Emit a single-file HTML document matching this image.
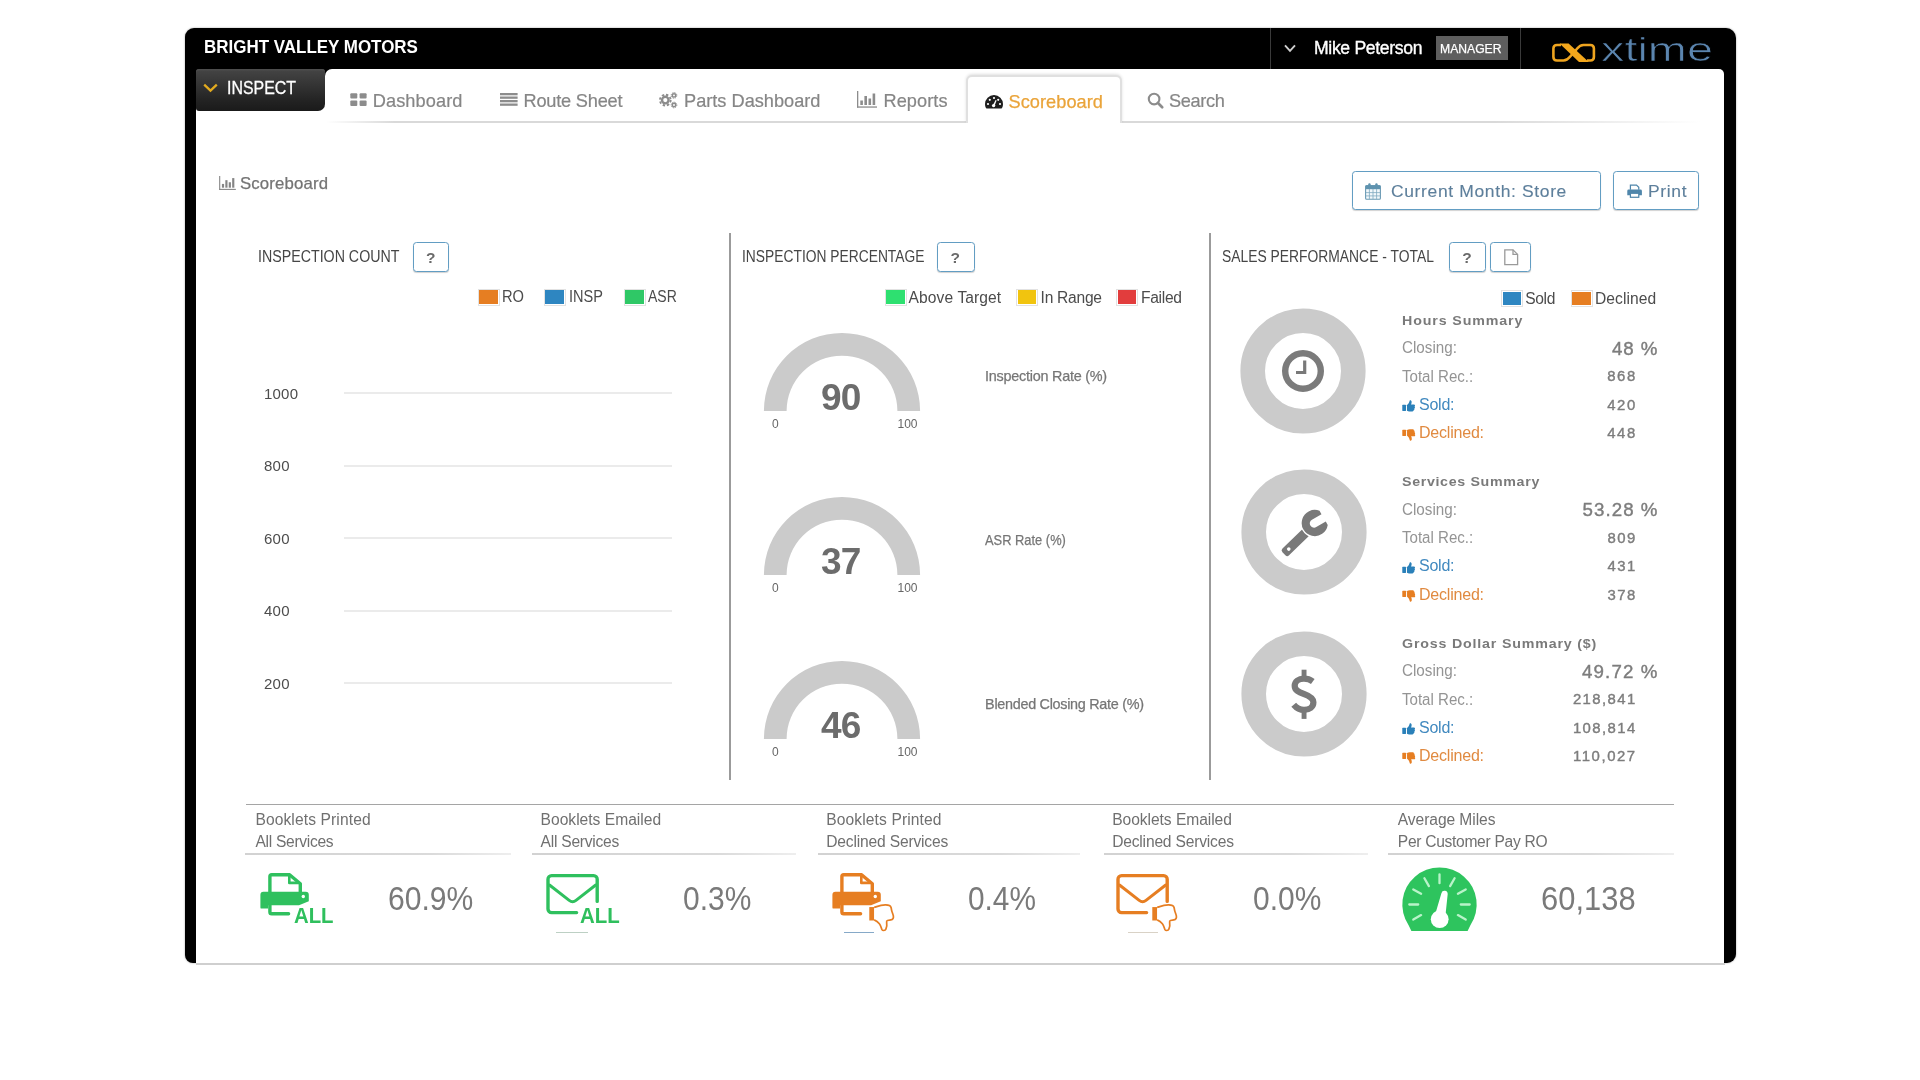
<!DOCTYPE html>
<html>
<head>
<meta charset="utf-8">
<title>Scoreboard</title>
<style>
*{box-sizing:border-box;margin:0;padding:0}
html,body{width:1920px;height:1080px;background:#fff;overflow:hidden}
body{font-family:"Liberation Sans",sans-serif;color:#777;position:relative}
#root{position:absolute;left:0;top:0;width:1920px;height:1080px;background:#fff;filter:blur(.4px)}
.a{position:absolute}
svg{position:absolute;overflow:visible}
.t{position:absolute;white-space:nowrap;line-height:1}
#frame{left:185px;top:28px;width:1551px;height:935px;background:#000;border-radius:9px 10px 9px 8px;box-shadow:0 0 2px rgba(0,0,0,.4)}
#content{left:196px;top:69px;width:1528px;height:894px;background:#fff;border-radius:0 5px 0 0}
#botline{left:196px;top:963px;width:1529px;height:2.2px;background:#cfcfcf}
#inspbg{left:196px;top:69px;width:140px;height:14px;background:#000}
#cc{left:325px;top:69px;width:20px;height:42px;background:#fff;border-radius:7px 0 0 0}
#inspect{left:196px;top:69px;width:129px;height:41.5px;background:linear-gradient(#454545 0,#333 40%,#232323 75%,#1a1a1a 100%);border-radius:3px 3px 7px 3px;box-shadow:inset 0 1.5px 0 #4d4d4d}
#tabline{left:326px;top:121px;width:1374px;height:1.5px;background:linear-gradient(90deg,rgba(215,215,215,0) 0,#d9d9d9 5%,#d9d9d9 85%,rgba(215,215,215,0) 100%)}
#acttab{left:965.5px;top:74.6px;width:156.5px;height:48px;background:#fff;border:2px solid #e0e0e0;border-bottom:none;border-radius:6px 6px 0 0;box-shadow:0 -1px 3px rgba(0,0,0,.12)}
#acttabcover{left:962px;top:122.5px;width:164px;height:6px;background:#fff}
.btn{position:absolute;border:1.5px solid #629dc3;border-radius:3.5px;background:#fff;box-shadow:0 1px 1px rgba(0,0,0,.18)}
.vl{position:absolute;width:2px;background:#9b9b9b;top:233px;height:547px}
.sw{position:absolute;width:22px;height:17px;border:1px solid #e2e2e2;padding:.7px;margin:-.5px 0 0 -.5px}
.sw i{display:block;width:100%;height:100%}
.grid{position:absolute;left:344px;width:328px;height:2px;background:#ebebeb}
.bu{position:absolute;height:1.5px;top:853.2px;background:linear-gradient(90deg,#d2d2d2 0,#dadada 70%,#eee 100%)}
</style>
</head>
<body>
<div id="root">
<div class="a" id="frame"></div>
<div class="a" id="content"></div>
<div class="a" id="botline"></div>
<div class="a" id="inspbg"></div>
<div class="a" id="cc"></div>
<div class="a" id="inspect"></div>

<!-- header bits -->
<svg style="left:203px;top:83px" width="15" height="10" viewBox="0 0 15 10"><path d="M1.2 1.6 L7.5 7.6 L13.8 1.6" fill="none" stroke="#e3ab1f" stroke-width="2.3"/></svg>
<div class="a" style="left:1270px;top:28px;width:1px;height:41px;background:#3a3a3a"></div>
<div class="a" style="left:1520px;top:28px;width:1px;height:41px;background:#3a3a3a"></div>
<svg style="left:1284px;top:44px" width="12" height="9" viewBox="0 0 12 9"><path d="M1 1.4 L6 6.8 L11 1.4" fill="none" stroke="#cfcfcf" stroke-width="1.9"/></svg>
<div class="a" style="left:1435.5px;top:35.5px;width:72px;height:24.5px;background:#5e5e5e"></div>
<!-- xtime logo -->
<svg style="left:1551px;top:42px" width="45" height="21" viewBox="0 0 45 21">
 <path d="M10 3 H6 Q2.4 3 2.4 6.5 V15 Q2.4 18.5 6 18.5 H12.5 Q16 18.5 19 14.8 L21.5 11.8 M36 18.5 H39.3 Q42.9 18.5 42.9 15 V6.5 Q42.9 3 39.3 3 H32.5 Q29 3 26 6.8 L23.5 9.8" fill="none" stroke="#eea41f" stroke-width="2.6"/>
 <path d="M8.6 1.6 H17.6 L37.8 19.9 H28 Z" fill="#f3a71c"/>
</svg>
<div class="t" id="xt" style="left:1601px;top:33.3px;font-size:33px;color:#5b85af;-webkit-text-stroke:.7px #000;transform-origin:0 0;transform:scaleX(1.42)">xtime</div>

<!-- tabs -->
<div class="a" id="tabline"></div>
<div class="a" id="acttab"></div>
<div class="a" id="acttabcover"></div>
<!-- dashboard icon -->
<svg style="left:350px;top:93px" width="17" height="13" viewBox="0 0 17 13" fill="#8c8c8c"><rect x=".3" y=".2" width="7" height="5.4" rx="1"/><rect x="9.6" y=".2" width="7" height="5.4" rx="1"/><rect x=".3" y="7.5" width="7" height="5.4" rx="1"/><rect x="9.6" y="7.5" width="7" height="5.4" rx="1"/></svg>
<!-- route sheet icon -->
<svg style="left:500px;top:93px" width="18" height="13" viewBox="0 0 18 13" fill="#8c8c8c"><rect x="0" y="0" width="17.6" height="2.3"/><rect x="0" y="3.5" width="17.6" height="2.3"/><rect x="0" y="7" width="17.6" height="2.3"/><rect x="0" y="10.5" width="17.6" height="2.3"/></svg>
<!-- cogs -->
<svg style="left:659px;top:92px" width="19" height="16" viewBox="0 0 19 16">
 <g fill="none" stroke="#8c8c8c">
 <circle cx="6.3" cy="8.1" r="3.3" stroke-width="2.4"/>
 <circle cx="6.3" cy="8.1" r="5.4" stroke-width="1.8" stroke-dasharray="2.4 1.85"/>
 <circle cx="15" cy="3.4" r="1.7" stroke-width="1.5"/>
 <circle cx="15" cy="3.4" r="2.8" stroke-width="1" stroke-dasharray="1.3 .9"/>
 <circle cx="15" cy="13" r="1.7" stroke-width="1.5"/>
 <circle cx="15" cy="13" r="2.8" stroke-width="1" stroke-dasharray="1.3 .9"/>
 </g>
</svg>
<!-- reports bar chart -->
<svg style="left:857px;top:91px" width="20" height="17" viewBox="0 0 20 17" fill="#8c8c8c"><rect x="0" y="0" width="1.3" height="16.6"/><rect x="0" y="15.4" width="20" height="1.3"/><rect x="3.3" y="9.5" width="2.6" height="4.5"/><rect x="7.4" y="5" width="2.6" height="9"/><rect x="11.5" y="7.5" width="2.6" height="6.5"/><rect x="15.6" y="2.5" width="2.6" height="11.5"/></svg>
<!-- tachometer -->
<svg style="left:985px;top:95px" width="18" height="14" viewBox="0 0 18 14">
 <path d="M9 0 A9 9 0 0 1 18 9 C18 10.8 17.5 12.3 16.8 13.2 C16.6 13.5 16.3 13.6 16 13.6 L2 13.6 C1.7 13.6 1.4 13.5 1.2 13.2 C0.5 12.3 0 10.8 0 9 A9 9 0 0 1 9 0 Z" fill="#1e1e1e"/>
 <g fill="#fff"><circle cx="3" cy="9" r="1.1"/><circle cx="4.8" cy="4.8" r="1.1"/><circle cx="9" cy="3" r="1.1"/><circle cx="15" cy="9" r="1.1"/><circle cx="13.2" cy="4.8" r="1.1"/><circle cx="8.6" cy="10.6" r="1.7"/><path d="M8 10 L10.6 5 L11.6 5.4 L9.6 10.8 Z"/></g>
</svg>
<!-- search -->
<svg style="left:1147px;top:92px" width="17" height="17" viewBox="0 0 17 17"><circle cx="7.1" cy="7.1" r="5.3" fill="none" stroke="#8c8c8c" stroke-width="2.1"/><path d="M11 11 L15.2 15.2" stroke="#8c8c8c" stroke-width="2.7" stroke-linecap="round"/></svg>

<!-- subtitle icon -->
<svg style="left:218px;top:175.6px" width="19" height="14.2" viewBox="0 0 20 17" fill="#858585"><rect x="0" y="0" width="1.3" height="16.6"/><rect x="0" y="15.4" width="20" height="1.3"/><rect x="3.3" y="9.5" width="2.6" height="4.5"/><rect x="7.4" y="5" width="2.6" height="9"/><rect x="11.5" y="7.5" width="2.6" height="6.5"/><rect x="15.6" y="2.5" width="2.6" height="11.5"/></svg>

<!-- buttons -->
<div class="btn" style="left:1352px;top:171px;width:248.5px;height:39px"></div>
<div class="btn" style="left:1613px;top:171px;width:85.5px;height:39px"></div>
<!-- calendar -->
<svg style="left:1365px;top:183px" width="16" height="17" viewBox="0 0 16 17">
 <rect x=".6" y="2.6" width="14.8" height="13.6" rx="1" fill="#f2f8fb" stroke="#6a9ab4" stroke-width="1.1"/>
 <rect x=".6" y="2.6" width="14.8" height="3.6" fill="#5f93af"/>
 <rect x="3.3" y="0.3" width="2.3" height="4" rx="1" fill="#5f93af"/><rect x="10.3" y="0.3" width="2.3" height="4" rx="1" fill="#5f93af"/>
 <g stroke="#7fa9c0" stroke-width=".8"><path d="M4.4 6 V16 M8 6 V16 M11.6 6 V16 M1 9.6 H15 M1 12.9 H15"/></g>
</svg>
<!-- small printer -->
<svg style="left:1626.7px;top:183.6px" width="15.2" height="14.6" viewBox="0 0 16 15">
 <path d="M3.6 6 V1 H10 L12.4 3.3 V6" fill="#fff" stroke="#4f86ab" stroke-width="1.3"/>
 <path d="M1.8 5.6 H14.2 A1.5 1.5 0 0 1 15.7 7.1 V11.6 H12.6 V9.2 H3.4 V11.6 H.3 V7.1 A1.5 1.5 0 0 1 1.8 5.6 Z" fill="#4f86ab"/>
 <rect x="3.6" y="9.6" width="8.8" height="4.2" fill="#fff" stroke="#4f86ab" stroke-width="1.3"/>
</svg>

<!-- panel separators -->
<div class="vl" style="left:728.5px"></div>
<div class="vl" style="left:1208.5px"></div>

<!-- ? buttons -->
<div class="btn" style="left:412.5px;top:242px;width:36px;height:29.5px"></div>
<div class="btn" style="left:937px;top:242px;width:37.5px;height:29.5px"></div>
<div class="btn" style="left:1449px;top:242px;width:36.6px;height:29.5px"></div>
<div class="btn" style="left:1490px;top:242px;width:41px;height:29.5px"></div>
<!-- doc icon -->
<svg style="left:1503.5px;top:249px" width="15" height="17" viewBox="0 0 15 17"><path d="M.8 .8 H9 L13.6 5.4 V15.6 H.8 Z" fill="none" stroke="#9a9a9a" stroke-width="1.3"/><path d="M9 .8 V5.4 H13.6" fill="none" stroke="#9a9a9a" stroke-width="1.3"/></svg>

<!-- legend swatches -->
<div class="sw" style="left:478px;top:289px"><i style="background:#e67e22"></i></div>
<div class="sw" style="left:544px;top:289px"><i style="background:#2e86c1"></i></div>
<div class="sw" style="left:624px;top:289px"><i style="background:#2fc866"></i></div>
<div class="sw" style="left:885px;top:289px"><i style="background:#2ee070"></i></div>
<div class="sw" style="left:1016.5px;top:289px"><i style="background:#f1c40f"></i></div>
<div class="sw" style="left:1116.5px;top:289px"><i style="background:#e23d3d"></i></div>
<div class="sw" style="left:1501.5px;top:290.5px"><i style="background:#2e86c1"></i></div>
<div class="sw" style="left:1571px;top:290.5px"><i style="background:#e67e22"></i></div>

<!-- grid lines -->
<div class="grid" style="top:392px"></div>
<div class="grid" style="top:464.6px"></div>
<div class="grid" style="top:537.2px"></div>
<div class="grid" style="top:609.8px"></div>
<div class="grid" style="top:682.4px"></div>

<!-- gauges -->
<svg style="left:761.9px;top:330.9px" width="160" height="82" viewBox="0 0 160 82"><path d="M1.9 80 A78.1 78.1 0 0 1 158.1 80 L135.4 80 A55.4 55.4 0 0 0 24.6 80 Z" fill="#cbcbcb"/></svg>
<svg style="left:761.9px;top:494.9px" width="160" height="82" viewBox="0 0 160 82"><path d="M1.9 80 A78.1 78.1 0 0 1 158.1 80 L135.4 80 A55.4 55.4 0 0 0 24.6 80 Z" fill="#cbcbcb"/></svg>
<svg style="left:761.9px;top:658.9px" width="160" height="82" viewBox="0 0 160 82"><path d="M1.9 80 A78.1 78.1 0 0 1 158.1 80 L135.4 80 A55.4 55.4 0 0 0 24.6 80 Z" fill="#cbcbcb"/></svg>

<!-- donuts -->
<svg style="left:1238.3px;top:305.6px" width="130" height="130" viewBox="0 0 130 130"><circle cx="65" cy="65" r="50.3" fill="none" stroke="#cbcbcb" stroke-width="24.6"/>
 <circle cx="65" cy="65" r="17.8" fill="none" stroke="#7b7b7b" stroke-width="6.4"/><path d="M66.7 54.6 V66.5 H58" fill="none" stroke="#797979" stroke-width="3.2" stroke-linejoin="miter"/></svg>
<svg style="left:1238.5px;top:467px" width="130" height="130" viewBox="0 0 130 130"><circle cx="65" cy="65" r="50.3" fill="none" stroke="#cbcbcb" stroke-width="24.6"/>
 <g transform="translate(44.9 86.8) rotate(-44.3)" fill="#797979"><path d="M2.6 -4.7 H30 V4.7 H2.6 A2.6 2.6 0 0 1 0 2.1 V-2.1 A2.6 2.6 0 0 1 2.6 -4.7 Z"/><circle cx="6.8" cy="0" r="1.8" fill="#fff"/></g>
 <g transform="translate(75.8 56) rotate(-30)"><circle r="14.3" fill="#fff"/><path d="M10.2 -4.3 L10.2 -8.2 A13.1 13.1 0 1 0 10.2 8.2 L10.2 4.3 L-.8 4.3 A4.3 4.3 0 0 1 -.8 -4.3 Z" fill="#797979"/></g></svg>
<svg style="left:1238.5px;top:628.5px" width="130" height="130" viewBox="0 0 130 130"><circle cx="65" cy="65" r="50.3" fill="none" stroke="#cbcbcb" stroke-width="24.6"/>
 <path d="M73.8 52.5 C71 50.5 68 49.7 65 49.7 C59.5 49.7 55.7 52.7 55.7 57 C55.7 61.5 60 63.3 65 65 C70 66.8 74.4 68.8 74.4 73.3 C74.4 78 70.5 80.9 65 80.9 C61 80.9 57.5 79 54.7 75.7" fill="none" stroke="#797979" stroke-width="6.2"/>
 <rect x="62.6" y="40.7" width="4.9" height="9.5" fill="#797979"/><rect x="62.6" y="80.5" width="4.9" height="9.4" fill="#797979"/></svg>

<!-- thumbs -->
<svg style="left:1401.6px;top:400.0px" width="13.4" height="11.5" viewBox="0 0 14 12" fill="#2a80b9"><rect x=".3" y="4.9" width="3.9" height="6.6" rx=".5"/><path d="M5.2 5.2 C6.6 4.2 7.6 2.6 8 .7 C8.3 -.3 10.1 .2 10.1 2 C10.1 3 9.7 4 9.4 4.6 H12.5 C13.7 4.6 14 6.2 13.1 6.8 C13.9 7.4 13.6 8.6 12.8 8.9 C13.3 9.6 12.9 10.6 12.1 10.8 C12.3 11.6 11.6 11.9 10.9 11.9 H8 C7 11.9 6 11.3 5.2 11.1 Z"/></svg>
<svg style="left:1401.6px;top:428.9px" width="13.6" height="12" viewBox="0 0 14 12" fill="#e67e22"><g transform="translate(0 12) scale(1 -1)"><rect x=".3" y="4.9" width="3.9" height="6.6" rx=".5"/><path d="M5.2 5.2 C6.6 4.2 7.6 2.6 8 .7 C8.3 -.3 10.1 .2 10.1 2 C10.1 3 9.7 4 9.4 4.6 H12.5 C13.7 4.6 14 6.2 13.1 6.8 C13.9 7.4 13.6 8.6 12.8 8.9 C13.3 9.6 12.9 10.6 12.1 10.8 C12.3 11.6 11.6 11.9 10.9 11.9 H8 C7 11.9 6 11.3 5.2 11.1 Z"/></g></svg>
<svg style="left:1401.6px;top:561.5px" width="13.4" height="11.5" viewBox="0 0 14 12" fill="#2a80b9"><rect x=".3" y="4.9" width="3.9" height="6.6" rx=".5"/><path d="M5.2 5.2 C6.6 4.2 7.6 2.6 8 .7 C8.3 -.3 10.1 .2 10.1 2 C10.1 3 9.7 4 9.4 4.6 H12.5 C13.7 4.6 14 6.2 13.1 6.8 C13.9 7.4 13.6 8.6 12.8 8.9 C13.3 9.6 12.9 10.6 12.1 10.8 C12.3 11.6 11.6 11.9 10.9 11.9 H8 C7 11.9 6 11.3 5.2 11.1 Z"/></svg>
<svg style="left:1401.6px;top:590.4px" width="13.6" height="12" viewBox="0 0 14 12" fill="#e67e22"><g transform="translate(0 12) scale(1 -1)"><rect x=".3" y="4.9" width="3.9" height="6.6" rx=".5"/><path d="M5.2 5.2 C6.6 4.2 7.6 2.6 8 .7 C8.3 -.3 10.1 .2 10.1 2 C10.1 3 9.7 4 9.4 4.6 H12.5 C13.7 4.6 14 6.2 13.1 6.8 C13.9 7.4 13.6 8.6 12.8 8.9 C13.3 9.6 12.9 10.6 12.1 10.8 C12.3 11.6 11.6 11.9 10.9 11.9 H8 C7 11.9 6 11.3 5.2 11.1 Z"/></g></svg>
<svg style="left:1401.6px;top:723.0px" width="13.4" height="11.5" viewBox="0 0 14 12" fill="#2a80b9"><rect x=".3" y="4.9" width="3.9" height="6.6" rx=".5"/><path d="M5.2 5.2 C6.6 4.2 7.6 2.6 8 .7 C8.3 -.3 10.1 .2 10.1 2 C10.1 3 9.7 4 9.4 4.6 H12.5 C13.7 4.6 14 6.2 13.1 6.8 C13.9 7.4 13.6 8.6 12.8 8.9 C13.3 9.6 12.9 10.6 12.1 10.8 C12.3 11.6 11.6 11.9 10.9 11.9 H8 C7 11.9 6 11.3 5.2 11.1 Z"/></svg>
<svg style="left:1401.6px;top:751.9px" width="13.6" height="12" viewBox="0 0 14 12" fill="#e67e22"><g transform="translate(0 12) scale(1 -1)"><rect x=".3" y="4.9" width="3.9" height="6.6" rx=".5"/><path d="M5.2 5.2 C6.6 4.2 7.6 2.6 8 .7 C8.3 -.3 10.1 .2 10.1 2 C10.1 3 9.7 4 9.4 4.6 H12.5 C13.7 4.6 14 6.2 13.1 6.8 C13.9 7.4 13.6 8.6 12.8 8.9 C13.3 9.6 12.9 10.6 12.1 10.8 C12.3 11.6 11.6 11.9 10.9 11.9 H8 C7 11.9 6 11.3 5.2 11.1 Z"/></g></svg>

<!-- bottom row -->
<div class="a" style="left:246px;top:803.5px;width:1428px;height:1.5px;background:#a5a5a5"></div>
<div class="bu" style="left:245px;width:266px"></div>
<div class="bu" style="left:532px;width:264px"></div>
<div class="bu" style="left:818px;width:262px"></div>
<div class="bu" style="left:1103.5px;width:264px"></div>
<div class="bu" style="left:1388px;width:286px"></div>
<svg style="left:259px;top:872px" width="52" height="46" viewBox="0 0 52 46">
 <g fill="none" stroke="#2fc05e" stroke-width="3.4" stroke-linejoin="round"><path d="M10.9 22 V4.6 A1.8 1.8 0 0 1 12.7 2.8 H30.6 L41.3 11.8 V22"/><path d="M30.3 3.5 V10.9 H39.5" stroke-width="2.6"/></g>
 <path d="M4.4 19.7 H46.8 A3 3 0 0 1 49.8 22.7 V29.2 L40 33.3 H9.2 V36.6 H2.6 A1.2 1.2 0 0 1 1.4 35.4 V22.7 A3 3 0 0 1 4.4 19.7 Z" fill="#2fc05e"/>
 <path d="M10.9 33 V40 A1.8 1.8 0 0 0 12.7 41.8 H29.6" fill="none" stroke="#2fc05e" stroke-width="3.4" stroke-linecap="round"/>
 <circle cx="44.3" cy="24.5" r="1.7" fill="#fff"/></svg>
<svg style="left:546px;top:872.6px" width="56" height="44" viewBox="0 0 56 44" fill="none" stroke="#2fc05e" stroke-width="3.4" stroke-linecap="round" stroke-linejoin="round">
 <path d="M51.2 28.4 V6.2 A3.6 3.6 0 0 0 47.6 2.6 H5.6 A3.6 3.6 0 0 0 2 6.2 V36 A3.6 3.6 0 0 0 5.6 39.6 H30.6"/>
 <path d="M3.8 12.2 L23.2 27.4 Q26.6 30 30 27.4 L49.4 12.2" stroke-width="3"/></svg>
<svg style="left:830.7px;top:872px" width="52" height="46" viewBox="0 0 52 46">
 <g fill="none" stroke="#e67e22" stroke-width="3.4" stroke-linejoin="round"><path d="M10.9 22 V4.6 A1.8 1.8 0 0 1 12.7 2.8 H30.6 L41.3 11.8 V22"/><path d="M30.3 3.5 V10.9 H39.5" stroke-width="2.6"/></g>
 <path d="M4.4 19.7 H46.8 A3 3 0 0 1 49.8 22.7 V29.2 L40 33.3 H9.2 V36.6 H2.6 A1.2 1.2 0 0 1 1.4 35.4 V22.7 A3 3 0 0 1 4.4 19.7 Z" fill="#e67e22"/>
 <path d="M10.9 33 V40 A1.8 1.8 0 0 0 12.7 41.8 H29.6" fill="none" stroke="#e67e22" stroke-width="3.4" stroke-linecap="round"/>
 <circle cx="44.3" cy="24.5" r="1.7" fill="#fff"/></svg>
<svg style="left:868.8px;top:903.6px" width="25.9" height="27.8" viewBox="0 0 27 29">
 <rect x=".3" y="3.2" width="5.2" height="14" fill="#e67e22"/>
 <path d="M5.4 3.6 C9 2.4 12 1 17 .9 C20.6 .8 22.4 1.6 23 3.6 C23.4 5 23.4 6 23.8 7.4 C24.2 9 25 10.4 25.4 12.4 C25.8 14.6 25 16.2 22.8 16.6 L19.2 17.2 C18.4 17.4 18.2 18 18.4 19 C18.8 21.4 18.6 24 17.6 26.2 C16.8 28 14.2 28.2 13.4 26.4 C12.6 24.4 12.2 22.4 10.8 20.6 C9.4 18.8 7.6 17.4 5.4 16.6" fill="#fff" stroke="#e67e22" stroke-width="1.8" stroke-linejoin="round"/></svg>
<svg style="left:1116px;top:872.8px" width="56" height="44" viewBox="0 0 56 44" fill="none" stroke="#e67e22" stroke-width="3.4" stroke-linecap="round" stroke-linejoin="round">
 <path d="M51.2 28.4 V6.2 A3.6 3.6 0 0 0 47.6 2.6 H5.6 A3.6 3.6 0 0 0 2 6.2 V36 A3.6 3.6 0 0 0 5.6 39.6 H30.6"/>
 <path d="M3.8 12.2 L23.2 27.4 Q26.6 30 30 27.4 L49.4 12.2" stroke-width="3"/></svg>
<svg style="left:1152.2px;top:903.8px" width="25.9" height="27.8" viewBox="0 0 27 29">
 <rect x=".3" y="3.2" width="5.2" height="14" fill="#e67e22"/>
 <path d="M5.4 3.6 C9 2.4 12 1 17 .9 C20.6 .8 22.4 1.6 23 3.6 C23.4 5 23.4 6 23.8 7.4 C24.2 9 25 10.4 25.4 12.4 C25.8 14.6 25 16.2 22.8 16.6 L19.2 17.2 C18.4 17.4 18.2 18 18.4 19 C18.8 21.4 18.6 24 17.6 26.2 C16.8 28 14.2 28.2 13.4 26.4 C12.6 24.4 12.2 22.4 10.8 20.6 C9.4 18.8 7.6 17.4 5.4 16.6" fill="#fff" stroke="#e67e22" stroke-width="1.8" stroke-linejoin="round"/></svg>
<svg style="left:1401.5px;top:866.9px" width="75" height="65" viewBox="0 0 75 65">
 <path d="M9.4 64 L6.6 58.3 A37.2 37.2 0 1 1 68.4 58.3 L65.6 64 Z" fill="#2ec45e"/>
 <path d="M19.1 48.1 L11.3 52.6 M16.2 37.5 L7.3 37.5 M19.1 26.8 L11.3 22.4 M26.9 19.1 L22.4 11.3 M37.5 16.2 L37.5 7.3 M48.1 19.1 L52.6 11.3 M55.9 26.8 L63.7 22.4 M58.8 37.5 L67.7 37.5 M55.9 48.1 L63.7 52.6" stroke="#b9f3c9" stroke-width="2.3" stroke-linecap="round" fill="none"/>
 <circle cx="37.7" cy="52.2" r="8.9" fill="#fff"/><path d="M33.6 46 L39.4 26.2 A3.2 3.2 0 0 1 45.7 27 L43.6 47 Z" fill="#fff"/></svg>
<div class="a" style="left:556px;top:931.5px;width:32px;height:1.2px;background:#bdd0c4"></div>
<div class="a" style="left:843.5px;top:931.5px;width:30px;height:1.2px;background:#86a9c8"></div>
<div class="a" style="left:1128px;top:931.5px;width:30px;height:1.2px;background:#d9d2c6"></div>

<div class="t" style="left:204.0px;top:38.6px;font-size:17.8px;color:#fff;font-weight:bold;transform-origin:0 0;transform:scaleX(0.954);">BRIGHT VALLEY MOTORS</div>
<div class="t" style="left:226.5px;top:78.1px;font-size:19px;color:#fff;transform-origin:0 0;transform:scaleX(0.838);-webkit-text-stroke:.3px #fff;">INSPECT</div>
<div class="t" style="left:1314.0px;top:39.6px;font-size:17.6px;color:#fff;letter-spacing:-0.33px;-webkit-text-stroke:.35px #fff;">Mike Peterson</div>
<div class="t" style="left:1440.0px;top:41.7px;font-size:13.6px;color:#fff;transform-origin:0 0;transform:scaleX(0.895);-webkit-text-stroke:.25px #fff;">MANAGER</div>
<div class="t" style="left:372.7px;top:91.9px;font-size:18.2px;color:#868686;letter-spacing:0.10px;-webkit-text-stroke:.2px #868686;">Dashboard</div>
<div class="t" style="left:523.5px;top:91.9px;font-size:18.2px;color:#868686;letter-spacing:-0.21px;-webkit-text-stroke:.2px #868686;">Route Sheet</div>
<div class="t" style="left:684.0px;top:91.9px;font-size:18.2px;color:#868686;-webkit-text-stroke:.2px #868686;">Parts Dashboard</div>
<div class="t" style="left:883.5px;top:91.9px;font-size:18.2px;color:#868686;letter-spacing:0.05px;-webkit-text-stroke:.2px #868686;">Reports</div>
<div class="t" style="left:1008.5px;top:92.7px;font-size:18.2px;color:#eaa43a;letter-spacing:0.05px;-webkit-text-stroke:.25px #eaa43a;">Scoreboard</div>
<div class="t" style="left:1169.0px;top:91.9px;font-size:18.2px;color:#868686;letter-spacing:-0.33px;-webkit-text-stroke:.2px #868686;">Search</div>
<div class="t" style="left:240.0px;top:174.6px;font-size:16.2px;color:#747474;transform-origin:0 0;transform:scaleX(1.035);letter-spacing:0.15px;-webkit-text-stroke:.25px #747474;">Scoreboard</div>
<div class="t" style="left:1390.9px;top:183.9px;font-size:15.9px;color:#5d7f9b;transform-origin:0 0;transform:scaleX(1.1);letter-spacing:0.58px;-webkit-text-stroke:.12px #5d7f9b;">Current Month: Store</div>
<div class="t" style="left:1648.0px;top:183.9px;font-size:15.9px;color:#5d7f9b;transform-origin:0 0;transform:scaleX(1.1);letter-spacing:0.58px;-webkit-text-stroke:.12px #5d7f9b;">Print</div>
<div class="t" style="left:257.7px;top:248.8px;font-size:15.6px;color:#464646;transform-origin:0 0;transform:scaleX(0.912);">INSPECTION COUNT</div>
<div class="t" style="left:742.4px;top:249.0px;font-size:15.6px;color:#464646;transform-origin:0 0;transform:scaleX(0.886);">INSPECTION PERCENTAGE</div>
<div class="t" style="left:1221.5px;top:249.0px;font-size:15.6px;color:#464646;transform-origin:0 0;transform:scaleX(0.889);">SALES PERFORMANCE - TOTAL</div>
<div class="t" style="left:426.0px;top:249.7px;font-size:15.5px;color:#6a6a6a;font-weight:bold;">?</div>
<div class="t" style="left:950.5px;top:249.7px;font-size:15.5px;color:#6a6a6a;font-weight:bold;">?</div>
<div class="t" style="left:1462.3px;top:249.7px;font-size:15.5px;color:#6a6a6a;font-weight:bold;">?</div>
<div class="t" style="left:501.5px;top:289.3px;font-size:15.6px;color:#4c4c4c;transform-origin:0 0;transform:scaleX(0.941);">RO</div>
<div class="t" style="left:569.0px;top:289.3px;font-size:15.6px;color:#4c4c4c;transform-origin:0 0;transform:scaleX(0.934);">INSP</div>
<div class="t" style="left:647.7px;top:289.3px;font-size:15.6px;color:#4c4c4c;transform-origin:0 0;transform:scaleX(0.898);">ASR</div>
<div class="t" style="left:908.6px;top:289.6px;font-size:15.6px;color:#4c4c4c;letter-spacing:0.09px;">Above Target</div>
<div class="t" style="left:1040.6px;top:289.6px;font-size:15.6px;color:#4c4c4c;letter-spacing:-0.27px;">In Range</div>
<div class="t" style="left:1140.9px;top:289.6px;font-size:15.6px;color:#4c4c4c;letter-spacing:-0.28px;">Failed</div>
<div class="t" style="left:1525.2px;top:290.6px;font-size:15.6px;color:#4c4c4c;letter-spacing:-0.34px;">Sold</div>
<div class="t" style="left:1595.0px;top:290.6px;font-size:15.6px;color:#4c4c4c;letter-spacing:0.06px;">Declined</div>
<div class="t" style="left:264.0px;top:385.8px;font-size:15px;color:#4c4c4c;letter-spacing:0.21px;">1000</div>
<div class="t" style="left:264.0px;top:458.3px;font-size:15px;color:#4c4c4c;letter-spacing:0.23px;">800</div>
<div class="t" style="left:264.0px;top:530.8px;font-size:15px;color:#4c4c4c;letter-spacing:0.23px;">600</div>
<div class="t" style="left:264.0px;top:602.8px;font-size:15px;color:#4c4c4c;letter-spacing:0.23px;">400</div>
<div class="t" style="left:264.0px;top:675.8px;font-size:15px;color:#4c4c4c;letter-spacing:0.23px;">200</div>
<div class="t" style="left:821.0px;top:378.8px;font-size:37px;color:#6c6c6c;font-weight:bold;letter-spacing:-0.76px;">90</div>
<div class="t" style="left:772.0px;top:418.1px;font-size:12px;color:#666;">0</div>
<div class="t" style="left:897.6px;top:418.1px;font-size:12px;color:#666;letter-spacing:-0.12px;">100</div>
<div class="t" style="left:985.1px;top:369.3px;font-size:14.4px;color:#767676;letter-spacing:-0.24px;-webkit-text-stroke:.25px #767676;">Inspection Rate (%)</div>
<div class="t" style="left:821.0px;top:542.8px;font-size:37px;color:#6c6c6c;font-weight:bold;letter-spacing:-0.76px;">37</div>
<div class="t" style="left:772.0px;top:582.1px;font-size:12px;color:#666;">0</div>
<div class="t" style="left:897.6px;top:582.1px;font-size:12px;color:#666;letter-spacing:-0.12px;">100</div>
<div class="t" style="left:985.1px;top:533.3px;font-size:14.4px;color:#767676;transform-origin:0 0;transform:scaleX(0.895);-webkit-text-stroke:.25px #767676;">ASR Rate (%)</div>
<div class="t" style="left:821.0px;top:706.8px;font-size:37px;color:#6c6c6c;font-weight:bold;letter-spacing:-0.76px;">46</div>
<div class="t" style="left:772.0px;top:746.1px;font-size:12px;color:#666;">0</div>
<div class="t" style="left:897.6px;top:746.1px;font-size:12px;color:#666;letter-spacing:-0.12px;">100</div>
<div class="t" style="left:985.1px;top:697.3px;font-size:14.4px;color:#767676;letter-spacing:-0.29px;-webkit-text-stroke:.25px #767676;">Blended Closing Rate (%)</div>
<div class="t" style="left:1401.5px;top:313.7px;font-size:13.3px;color:#7a7a7a;font-weight:bold;transform-origin:0 0;transform:scaleX(1.07);letter-spacing:0.82px;">Hours Summary</div>
<div class="t" style="left:1401.5px;top:340.4px;font-size:16px;color:#949494;transform-origin:0 0;transform:scaleX(0.950);">Closing:</div>
<div class="t" style="left:1612.0px;top:339.9px;font-size:18.7px;color:#7d7d7d;letter-spacing:0.96px;-webkit-text-stroke:.4px #7d7d7d;">48 %</div>
<div class="t" style="left:1401.5px;top:368.5px;font-size:16px;color:#949494;transform-origin:0 0;transform:scaleX(0.942);">Total Rec.:</div>
<div class="t" style="left:1607.2px;top:369.3px;font-size:14.9px;color:#7d7d7d;letter-spacing:1.57px;-webkit-text-stroke:.4px #7d7d7d;">868</div>
<div class="t" style="left:1419.0px;top:396.9px;font-size:16px;color:#4189bf;letter-spacing:-0.24px;">Sold:</div>
<div class="t" style="left:1607.2px;top:397.7px;font-size:14.9px;color:#7d7d7d;letter-spacing:1.57px;-webkit-text-stroke:.4px #7d7d7d;">420</div>
<div class="t" style="left:1419.0px;top:425.4px;font-size:16px;color:#e08a40;letter-spacing:-0.21px;">Declined:</div>
<div class="t" style="left:1607.2px;top:426.2px;font-size:14.9px;color:#7d7d7d;letter-spacing:1.57px;-webkit-text-stroke:.4px #7d7d7d;">448</div>
<div class="t" style="left:1401.5px;top:475.2px;font-size:13.3px;color:#7a7a7a;font-weight:bold;transform-origin:0 0;transform:scaleX(1.07);letter-spacing:0.62px;">Services Summary</div>
<div class="t" style="left:1401.5px;top:501.9px;font-size:16px;color:#949494;transform-origin:0 0;transform:scaleX(0.950);">Closing:</div>
<div class="t" style="left:1582.6px;top:501.4px;font-size:18.7px;color:#7d7d7d;letter-spacing:1.05px;-webkit-text-stroke:.4px #7d7d7d;">53.28 %</div>
<div class="t" style="left:1401.5px;top:530.0px;font-size:16px;color:#949494;transform-origin:0 0;transform:scaleX(0.942);">Total Rec.:</div>
<div class="t" style="left:1607.4px;top:530.8px;font-size:14.9px;color:#7d7d7d;letter-spacing:1.47px;-webkit-text-stroke:.4px #7d7d7d;">809</div>
<div class="t" style="left:1419.0px;top:558.4px;font-size:16px;color:#4189bf;letter-spacing:-0.24px;">Sold:</div>
<div class="t" style="left:1607.4px;top:559.2px;font-size:14.9px;color:#7d7d7d;letter-spacing:1.47px;-webkit-text-stroke:.4px #7d7d7d;">431</div>
<div class="t" style="left:1419.0px;top:586.9px;font-size:16px;color:#e08a40;letter-spacing:-0.21px;">Declined:</div>
<div class="t" style="left:1607.4px;top:587.7px;font-size:14.9px;color:#7d7d7d;letter-spacing:1.47px;-webkit-text-stroke:.4px #7d7d7d;">378</div>
<div class="t" style="left:1401.5px;top:636.7px;font-size:13.3px;color:#7a7a7a;font-weight:bold;transform-origin:0 0;transform:scaleX(1.07);letter-spacing:0.76px;">Gross Dollar Summary ($)</div>
<div class="t" style="left:1401.5px;top:663.4px;font-size:16px;color:#949494;transform-origin:0 0;transform:scaleX(0.950);">Closing:</div>
<div class="t" style="left:1582.0px;top:662.9px;font-size:18.7px;color:#7d7d7d;letter-spacing:1.15px;-webkit-text-stroke:.4px #7d7d7d;">49.72 %</div>
<div class="t" style="left:1401.5px;top:691.5px;font-size:16px;color:#949494;transform-origin:0 0;transform:scaleX(0.942);">Total Rec.:</div>
<div class="t" style="left:1572.9px;top:692.3px;font-size:14.9px;color:#7d7d7d;letter-spacing:1.41px;-webkit-text-stroke:.4px #7d7d7d;">218,841</div>
<div class="t" style="left:1419.0px;top:719.9px;font-size:16px;color:#4189bf;letter-spacing:-0.24px;">Sold:</div>
<div class="t" style="left:1572.9px;top:720.7px;font-size:14.9px;color:#7d7d7d;letter-spacing:1.41px;-webkit-text-stroke:.4px #7d7d7d;">108,814</div>
<div class="t" style="left:1419.0px;top:748.4px;font-size:16px;color:#e08a40;letter-spacing:-0.21px;">Declined:</div>
<div class="t" style="left:1572.9px;top:749.2px;font-size:14.9px;color:#7d7d7d;letter-spacing:1.59px;-webkit-text-stroke:.4px #7d7d7d;">110,027</div>
<div class="t" style="left:255.4px;top:812.3px;font-size:15.6px;color:#707070;letter-spacing:0.11px;">Booklets Printed</div>
<div class="t" style="left:255.4px;top:834.0px;font-size:15.6px;color:#707070;letter-spacing:-0.29px;">All Services</div>
<div class="t" style="left:540.6px;top:812.3px;font-size:15.6px;color:#707070;">Booklets Emailed</div>
<div class="t" style="left:540.6px;top:834.0px;font-size:15.6px;color:#707070;letter-spacing:-0.25px;">All Services</div>
<div class="t" style="left:826.2px;top:812.3px;font-size:15.6px;color:#707070;letter-spacing:0.12px;">Booklets Printed</div>
<div class="t" style="left:826.2px;top:834.0px;font-size:15.6px;color:#707070;letter-spacing:-0.17px;">Declined Services</div>
<div class="t" style="left:1112.2px;top:812.3px;font-size:15.6px;color:#707070;letter-spacing:-0.05px;">Booklets Emailed</div>
<div class="t" style="left:1112.2px;top:834.0px;font-size:15.6px;color:#707070;letter-spacing:-0.19px;">Declined Services</div>
<div class="t" style="left:1397.8px;top:812.3px;font-size:15.6px;color:#707070;letter-spacing:-0.07px;">Average Miles</div>
<div class="t" style="left:1397.8px;top:834.0px;font-size:15.6px;color:#707070;letter-spacing:-0.30px;">Per Customer Pay RO</div>
<div class="t" style="left:388.0px;top:882.1px;font-size:33px;color:#7a7a7a;transform-origin:0 0;transform:scaleX(0.912);">60.9%</div>
<div class="t" style="left:682.5px;top:882.1px;font-size:33px;color:#7a7a7a;transform-origin:0 0;transform:scaleX(0.908);">0.3%</div>
<div class="t" style="left:968.1px;top:882.1px;font-size:33px;color:#7a7a7a;transform-origin:0 0;transform:scaleX(0.903);">0.4%</div>
<div class="t" style="left:1253.3px;top:882.1px;font-size:33px;color:#7a7a7a;transform-origin:0 0;transform:scaleX(0.908);">0.0%</div>
<div class="t" style="left:1541.0px;top:882.1px;font-size:33px;color:#7a7a7a;transform-origin:0 0;transform:scaleX(0.937);">60,138</div>
<div class="t" style="left:293.6px;top:905.0px;font-size:21.6px;color:#2fbf5d;font-weight:bold;transform-origin:0 0;transform:scaleX(0.941);">ALL</div>
<div class="t" style="left:580.0px;top:905.0px;font-size:21.6px;color:#2fbf5d;font-weight:bold;transform-origin:0 0;transform:scaleX(0.946);">ALL</div>
</div>
</body>
</html>
